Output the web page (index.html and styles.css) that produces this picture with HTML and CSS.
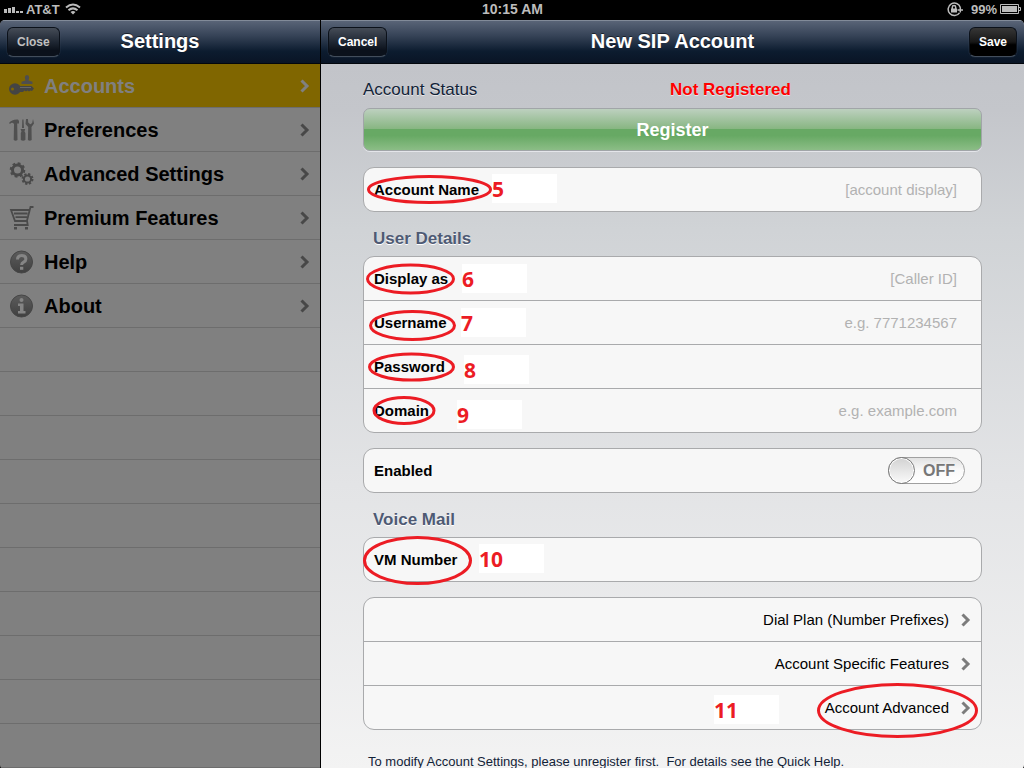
FILE: index.html
```html
<!DOCTYPE html>
<html lang="en">
<head>
<meta charset="utf-8">
<meta name="viewport" content="width=device-width, initial-scale=1">
<title>New SIP Account</title>
<link rel="stylesheet" href="styles.css">
</head>
<body>
<svg class="defs" width="0" height="0" aria-hidden="true">
  <defs>
    <linearGradient id="metal" x1="0" y1="0" x2="0" y2="1"><stop offset="0" stop-color="#5c5c5c"/><stop offset="1" stop-color="#404040"/></linearGradient>
    <symbol id="chevron" viewBox="0 0 10 14"><path d="M1.5 1.5 7 7l-5.500 5.500" fill="none" stroke="currentColor" stroke-width="3"/></symbol>
  </defs>
</svg>
<div class="status-bar">
  <div class="status-left">
    <svg width="19" height="8" viewBox="0 0 19 8" fill="#bcbcbc"><path d="M0 4h3v4H0zM4 3h3v5H4zM8 2h3v6H8zM12 6h3v2h-3zM16 6h3v2h-3z"/></svg>
    <span>AT&amp;T</span>
    <svg width="16" height="12" viewBox="0 0 16 12" fill="none" stroke="#bcbcbc" stroke-width="2"><path d="M1 4.500Q8-1.500 15 4.500M3.500 7.300Q8 3.500 12.500 7.300"/><path d="M5.500 9q2.500-2 5 0L8 11.500z" fill="#bcbcbc" stroke="none"/></svg>
  </div>
  <div class="clock">10:15 AM</div>
  <div class="status-right">
    <svg width="17" height="15" viewBox="0 0 17 15" fill="none" stroke="#bcbcbc" stroke-width="1.500"><path d="M13.300 5.500A6.200 6.200 0 1 0 12.500 10.800M10.500 8h5.500M13.300 5.500v5"/><path d="M4 6.500h6V10.500H4z" fill="#bcbcbc" stroke="none"/><path d="M5.300 7V5.300a1.700 1.700 0 0 1 3.400 0V7"/></svg>
    <span>99%</span>
    <svg width="21" height="10" viewBox="0 0 21 10" fill="none" stroke="#bcbcbc"><path d="M.5.500h18v9H.5zM18.500 3.500h2v3h-2"/><path d="M2 2h15v6H2z" fill="#bcbcbc" stroke="none"/></svg>
  </div>
</div>
<div class="panes">
  <nav class="sidebar" aria-label="Settings">
    <header class="bar bar-left"><button class="bar-button muted" type="button">Close</button><h1>Settings</h1></header>
    <ul class="menu">
      <li class="selected"><a href="#accounts">
        <svg class="menu-icon" viewBox="0 0 26 24" fill="#444"><ellipse cx="6" cy="15" rx="6" ry="5.800"/><path d="M8 12h14.500l2.500 2.500-2 2.500-1.500-.5-1.500 1-1.500-1-1.500 1-1.500-1-1.500 1.500H9z"/><circle cx="3.500" cy="15" r="1.500" fill="#806600"/><path fill="#4e4e4e" d="M12.500 10V7.800l4-1.300-.7-3q0-2.500 2.200-2.500t2.200 2.500l-.7 3 4 1.300V10z"/><path d="M11 13.500h11" stroke="#666"/></svg>
        <span>Accounts</span><svg class="chevron"><use href="#chevron"/></svg></a></li>
      <li><a href="#preferences">
        <svg class="menu-icon" viewBox="0 0 26 24" fill="#505050"><path d="M0 5q3-4 9-3.500l1 1.500v2.500H8.200L8.500 22q-1.900 1.500-3.800 0L5 6Q3 3.500 1 6zM13.300 1.500h1.200L15 10h-2zM11.500 11h4.700l-.7 2.500.9 1.500v7q-2.300 1.500-4.600 0v-7l.7-1.500zM17 1 16.500 6l2.700 3-.3 13q1.900 1.500 3.800 0L22.500 9 25 5.500 24 1l-.8 4-1.900 1.200L19.200 4.500 19 1z"/></svg>
        <span>Preferences</span><svg class="chevron"><use href="#chevron"/></svg></a></li>
      <li><a href="#advanced">
        <svg class="menu-icon" viewBox="0 0 26 24" fill="none" stroke="#4a4a4a"><circle cx="8.500" cy="8" r="5" stroke-width="3"/><circle cx="8.500" cy="8" r="6.800" stroke-width="2" stroke-dasharray="2.800 2.540"/><circle cx="18.500" cy="17" r="3.600" stroke-width="2"/><circle cx="18.500" cy="17" r="5" stroke-width="2" stroke-dasharray="2.200 1.730"/></svg>
        <span>Advanced Settings</span><svg class="chevron"><use href="#chevron"/></svg></a></li>
      <li><a href="#premium">
        <svg class="menu-icon" viewBox="0 0 26 24" fill="none" stroke="#4a4a4a" stroke-width="1.800"><path d="M24.500 1h-3L18 14.500l.7 4.500H5M20.500 4H2l4 11h12M5 7.500h13.500M6.500 11.200h11.500"/><path d="M5 21h3v2.500H5zM16 21h3v2.500h-3z" fill="#4a4a4a" stroke="none"/></svg>
        <span>Premium Features</span><svg class="chevron"><use href="#chevron"/></svg></a></li>
      <li><a href="#help">
        <svg class="menu-icon" viewBox="0 0 26 24"><circle cx="12.500" cy="12" r="11" fill="url(#metal)" stroke="#464646"/><path d="M8.500 9.500q0-4 4.200-4t4.200 3.500q0 2-2.300 3.200-2 1-2 2.800" fill="none" stroke="#858585" stroke-width="3"/><path d="M11 16.800h3.300v3H11z" fill="#858585"/></svg>
        <span>Help</span><svg class="chevron"><use href="#chevron"/></svg></a></li>
      <li><a href="#about">
        <svg class="menu-icon" viewBox="0 0 26 24"><circle cx="12.500" cy="12" r="11" fill="url(#metal)" stroke="#464646"/><circle cx="12.500" cy="6" r="2" fill="#858585"/><path d="M9 9.500h5.500V17h2v2.500H9V17h2v-5H9z" fill="#858585"/></svg>
        <span>About</span><svg class="chevron"><use href="#chevron"/></svg></a></li>
    </ul>
  </nav>
  <main class="detail">
    <header class="bar"><button class="bar-button" type="button">Cancel</button><h2>New SIP Account</h2><button class="bar-button dark" type="button">Save</button></header>
    <form class="content">
      <div class="account-status"><span>Account Status</span><strong>Not Registered</strong></div>
      <button class="register" type="button">Register</button>
      <div class="group">
        <div class="row"><label for="account">Account Name</label><input id="account" type="text" placeholder="[account display]">
          <svg class="ring ring-5"><ellipse cx="50%" cy="50%"/></svg><span class="note note-5">5</span></div>
      </div>
      <h3>User Details</h3>
      <div class="group">
        <div class="row"><label for="display">Display as</label><input id="display" type="text" placeholder="[Caller ID]">
          <svg class="ring ring-6"><ellipse cx="50%" cy="50%"/></svg><span class="note note-6">6</span></div>
        <div class="row"><label for="username">Username</label><input id="username" type="text" placeholder="e.g. 7771234567">
          <svg class="ring ring-7"><ellipse cx="50%" cy="50%"/></svg><span class="note note-7">7</span></div>
        <div class="row"><label for="password">Password</label><input id="password" type="password">
          <svg class="ring ring-8"><ellipse cx="50%" cy="50%"/></svg><span class="note note-8">8</span></div>
        <div class="row"><label for="domain">Domain</label><input id="domain" type="text" placeholder="e.g. example.com">
          <svg class="ring ring-9"><ellipse cx="50%" cy="50%"/></svg><span class="note note-9">9</span></div>
      </div>
      <div class="group">
        <div class="row row-switch"><label for="enabled">Enabled</label><span class="switch"><input id="enabled" type="checkbox" role="switch"><span class="switch-text" aria-hidden="true">OFF</span></span></div>
      </div>
      <h3>Voice Mail</h3>
      <div class="group">
        <div class="row"><label for="vm">VM Number</label><input id="vm" type="text">
          <svg class="ring ring-10"><ellipse cx="50%" cy="50%"/></svg><span class="note note-10">10</span></div>
      </div>
      <div class="group">
        <div class="row"><a href="#dial-plan">Dial Plan (Number Prefixes)<svg class="chevron"><use href="#chevron"/></svg></a></div>
        <div class="row"><a href="#features">Account Specific Features<svg class="chevron"><use href="#chevron"/></svg></a></div>
        <div class="row"><a href="#account-advanced">Account Advanced<svg class="chevron"><use href="#chevron"/></svg></a>
          <svg class="ring ring-11"><ellipse cx="50%" cy="50%"/></svg><span class="note note-11">11</span></div>
      </div>
      <p class="hint">To modify Account Settings, please unregister first.&nbsp; For details see the Quick Help.</p>
    </form>
  </main>
</div>
</body>
</html>
```
FILE: styles.css
```css
* { box-sizing: border-box; }
body {
  margin: 0;
  min-height: 100vh;
  display: flex;
  flex-direction: column;
  background: #000;
  font-family: "Liberation Sans", Arial, sans-serif;
}
h1, h2, h3, p, ul { margin: 0; padding: 0; }
button, input { font-family: inherit; }
a { color: inherit; text-decoration: none; }
.defs { position: absolute; }

.status-bar {
  display: grid;
  grid-template-columns: 1fr auto 1fr;
  align-items: center;
  height: 20px;
  padding: 0 3px 2px 4px;
  color: #bcbcbc;
  font-size: 13px;
  font-weight: bold;
}
.clock { font-size: 14px; }
.status-left, .status-right { display: flex; align-items: center; }
.status-left { gap: 3px; }
.status-left svg:last-child { margin-left: 2px; }
.status-right { justify-content: flex-end; gap: 3px; }
.status-right svg:first-child { margin-right: 4px; }

.panes { flex: 1; display: flex; gap: 1px; }
.sidebar {
  flex: 0 0 320px;
  border-radius: 5px 0 0 5px;
  overflow: hidden;
  background: repeating-linear-gradient(#808080 0 43px, #6d6d6d 43px 44px);
}
.detail {
  flex: 1;
  min-width: 0;
  border-radius: 0 5px 5px 0;
  overflow: hidden;
  background: linear-gradient(#c0c2c7, #c4c6cb 12%, #d0d3d6 28%, #e3e4e6 62%, #f3f3f3);
}
.bar {
  height: 44px;
  display: grid;
  grid-template-columns: 60px 1fr 60px;
  align-items: center;
  padding: 0 7px;
  border-top: 1px solid #828b99;
  border-bottom: 1px solid #02060c;
  background: linear-gradient(#596477, #364357 35%, #0c1c2f 72%, #091425);
  color: #fff;
}
.bar h1, .bar h2 {
  padding-bottom: 2px;
  font-size: 20px;
  line-height: 24px;
  text-align: center;
  text-shadow: 0 -1px 0 #0008;
}
.bar-button {
  justify-self: start;
  height: 30px;
  padding: 0 9px;
  border: 1px solid #0b111a;
  border-bottom-color: #424d5b;
  border-radius: 6px;
  background: linear-gradient(#454c57, #1f2733 50%, #0b111b 80%);
  box-shadow: 0 0 1px #60697a;
  color: #fff;
  font-size: 12px;
  font-weight: bold;
}
.muted { color: #c0c0c0; }
.dark { justify-self: end; background: linear-gradient(#363636, #171717 50%, #000 60%); }

.menu { list-style: none; }
.menu li { height: 44px; border-bottom: 1px solid #6d6d6d; }
.menu a {
  display: flex;
  align-items: center;
  height: 100%;
  padding: 0 10px 0 9px;
  font-size: 20px;
  font-weight: bold;
}
.menu span { flex: 1; margin-left: 9px; padding-top: 2px; }
.menu .selected { background: #806600; color: #808080; }
.menu-icon { width: 26px; height: 24px; }
.chevron { width: 10px; height: 14px; color: #484848; }
.selected .chevron { color: #808080; }

.content { padding: 15px 42px 0; }
.account-status {
  display: grid;
  grid-template-columns: 307px 1fr;
  font-size: 17px;
  line-height: 22px;
  margin-bottom: 7px;
  color: #122338;
  text-shadow: 0 1px 0 #fff9;
}
.account-status strong { color: #f00; }
.register {
  display: block;
  width: 100%;
  height: 43px;
  margin-bottom: 16px;
  padding-top: 3px;
  border: 1px solid #a1a5a8;
  border-radius: 7px;
  background: linear-gradient(#bdd0bf, #86b580 50%, #67a964 50%, #67a964 65%, #8bbd86);
  box-shadow: 0 1px 0 #e4e5ea;
  color: #fff;
  font-size: 18px;
  font-weight: bold;
}
.group {
  margin-bottom: 15px;
  border: 1px solid #a9aaac;
  border-radius: 11px;
  background: #f7f7f7;
}
.row {
  position: relative;
  display: flex;
  align-items: center;
  height: 44px;
  padding: 0 10px;
  font-size: 15px;
}
.group .row:last-child { height: 43px; }
.row:not(:last-child) { border-bottom: 1px solid #a9aaac; }
.row label { font-weight: bold; }
.row input[type="text"], .row input[type="password"] {
  flex: 1;
  min-width: 0;
  height: 100%;
  padding: 0 14px 0 0;
  border: 0;
  background: none;
  text-align: right;
  font-size: 15px;
}
.row input::placeholder { color: #b2b2b2; opacity: 1; }
.row a { flex: 1; display: flex; align-items: center; justify-content: flex-end; gap: 12px; }
.row .chevron { color: #7c7c7c; }
.content h3 {
  padding: 1px 10px 0;
  margin-bottom: 6px;
  font-size: 17px;
  line-height: 22px;
  color: #4e5a74;
  text-shadow: 0 1px 0 #fff;
}
.row-switch { justify-content: space-between; padding-right: 16px; }
.switch { display: grid; align-items: center; }
.switch > * { grid-area: 1 / 1; }
.switch input {
  appearance: none;
  width: 77px;
  height: 27px;
  margin: 0;
  border: 1px solid #a0a0a0;
  border-radius: 14px;
  background: linear-gradient(#e2e2e2, #fafafa 50%, #fff);
}
.switch input::before {
  content: "";
  display: block;
  box-sizing: border-box;
  width: 27px;
  height: 27px;
  margin: -1px;
  border: 1px solid #7b7b7b;
  border-radius: 50%;
  background: linear-gradient(#d2d2d2, #fafafa);
  box-shadow: inset 0 0 0 1px #fff;
}
.switch-text { justify-self: end; padding-right: 10px; color: #777; font-size: 16px; font-weight: bold; pointer-events: none; }
.hint { padding: 0 5px; margin-top: 24px; font-size: 13px; line-height: 16px; color: #122338; white-space: nowrap; }

/* Numbered callouts laid over the form rows */
.ring { position: absolute; fill: none; stroke: #ec1c24; stroke-width: 3px; pointer-events: none; z-index: 2; }
.note {
  position: absolute;
  z-index: 1;
  width: 65px;
  height: 29px;
  background: #fff;
  color: #ec1c24;
  font: bold 21px/30px "Open Sans", "Noto Sans", sans-serif;
  pointer-events: none;
}
.ring-5 { left: 3px; top: 7px; width: 125px; height: 29px; }
.ring-5 ellipse { rx: 61px; ry: 13px; }
.note-5 { left: 128px; top: 6px; }
.ring-6 { left: 2px; top: 6px; width: 89px; height: 32px; }
.ring-6 ellipse { rx: 43px; ry: 14px; }
.note-6 { left: 98px; top: 7px; }
.ring-7 { left: 5px; top: 9px; width: 87px; height: 31px; }
.ring-7 ellipse { rx: 42px; ry: 14px; }
.note-7 { left: 97px; top: 7px; }
.ring-8 { left: 4px; top: 7px; width: 87px; height: 30px; }
.ring-8 ellipse { rx: 42px; ry: 13px; }
.note-8 { left: 100px; top: 10px; }
.ring-9 { left: 8px; top: 7px; width: 64px; height: 29px; }
.ring-9 ellipse { rx: 30px; ry: 13px; }
.note-9 { left: 93px; top: 11px; }
.ring-10 { left: -1px; top: -2px; width: 109px; height: 49px; }
.ring-10 ellipse { rx: 53px; ry: 23px; }
.note-10 { left: 115px; top: 6px; }
.ring-11 { right: 3px; top: -3px; width: 161px; height: 55px; }
.ring-11 ellipse { rx: 79px; ry: 26px; }
.note-11 { right: 202px; top: 9px; }
```
